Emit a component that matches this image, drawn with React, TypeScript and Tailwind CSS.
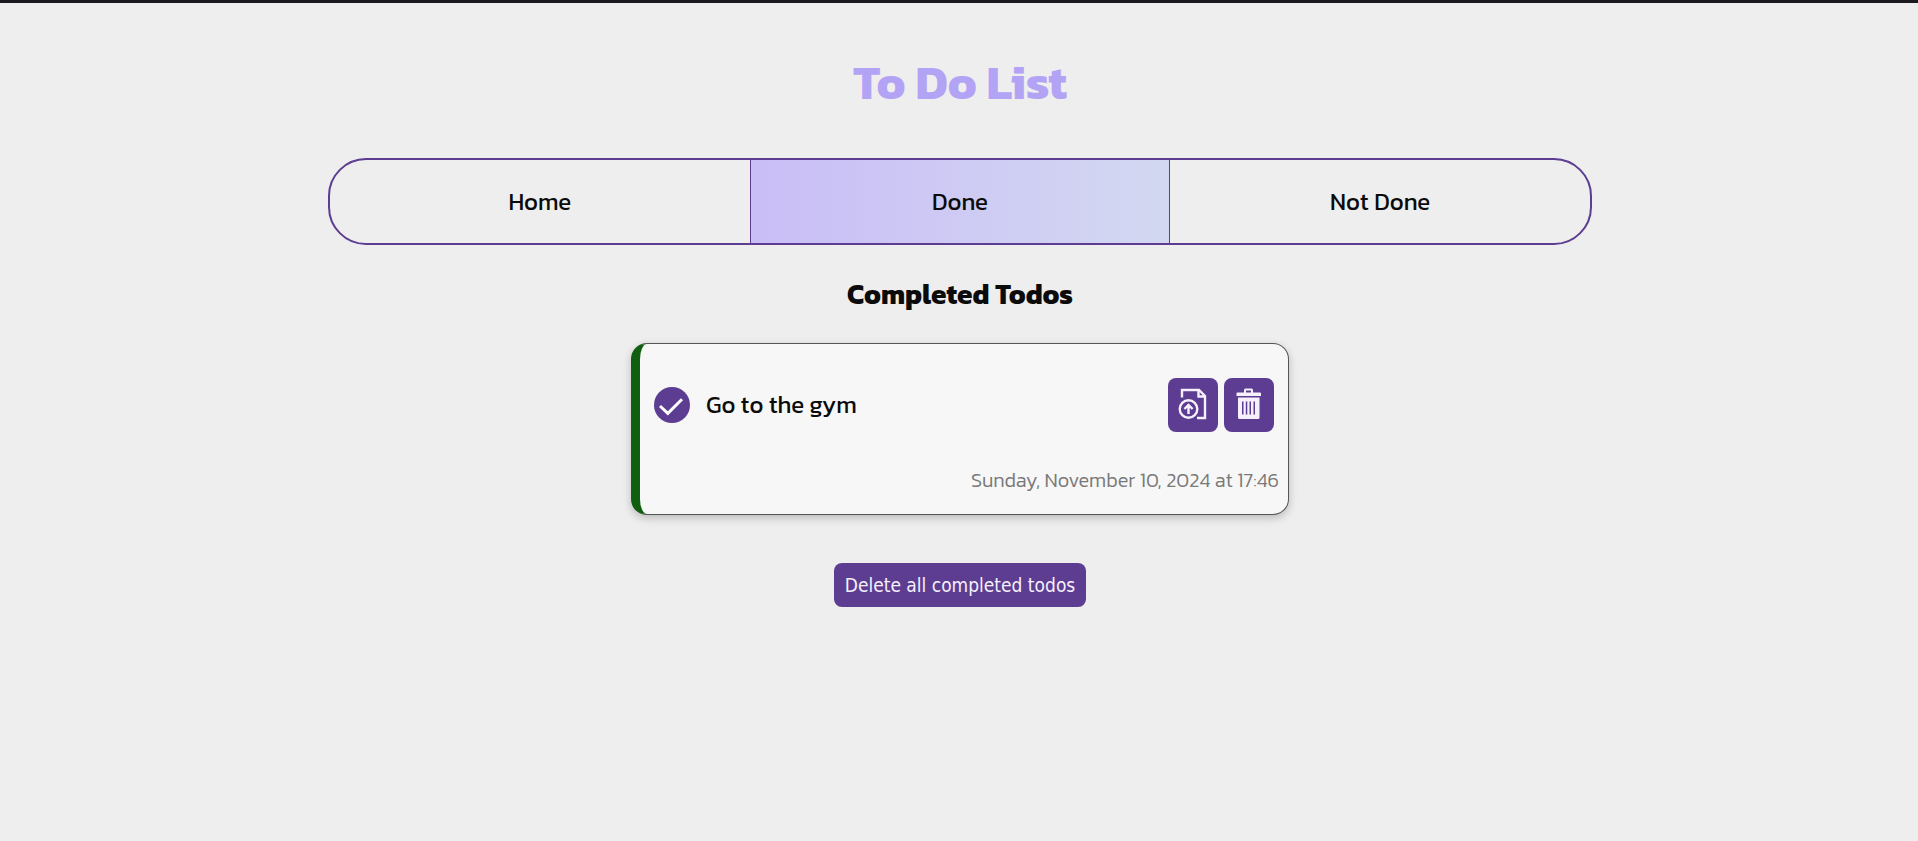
import React, { useState } from "react";

const tabs = ["Home", "Done", "Not Done"];

function CheckIcon() {
  return (
    <svg viewBox="0 0 36 36" className="size-9" aria-hidden="true">
      <circle cx="18" cy="18" r="18" fill="#5c3d91" />
      <path d="M6 19 L13.8 26.3 L28 12.2" fill="none" stroke="#fff" strokeWidth="3" />
    </svg>
  );
}

function RestoreIcon() {
  return (
    <svg viewBox="0 0 32 32" className="size-8" fill="none" stroke="#f5f0fb" strokeWidth="2.4" aria-hidden="true">
      <path d="M5 9.500V2H22L28 8V30H20" />
      <path d="M21.500 2V8.500H28" />
      <circle cx="11.5" cy="21" r="8.8" />
      <path d="M11.500 26V17M7.400 21L11.500 16.900L15.600 21" />
    </svg>
  );
}

function TrashIcon() {
  return (
    <svg viewBox="0 0 32 32" className="size-8" aria-hidden="true">
      <path
        fill="#f5f0fb"
        fillRule="evenodd"
        d="M11 4.5V2Q11 0.500 12.500 0.500H18.500Q20 0.500 20 2V4.500H27Q28 4.500 28 5.500V8H3.500V5.500Q3.500 4.500 4.500 4.500ZM13 4.500H18V2.500H13ZM5 9.500H26.500V29.500Q26.500 31 25 31H6.500Q5 31 5 29.500ZM9 13.500V26.500H10.500V13.500ZM12.800 13.500V26.500H14.300V13.500ZM16.500 13.500V26.500H18V13.500ZM20.500 13.500V26.500H22V13.500Z"
      />
    </svg>
  );
}

export default function App() {
  const [active, setActive] = useState("Done");
  return (
    <div className="min-h-screen border-t-3 border-[#1c1a1f] bg-[#eeeeee] font-['Kanit','Noto_Sans',sans-serif] text-[#0b0b0b]">
      <main className="flex flex-col items-center pl-0.5">
        <h1 className="mt-[47px] text-5xl leading-[64px] font-bold text-[#b3a3f5]">
          To Do List
        </h1>
        <nav className="mt-11 grid h-[87px] w-[66%] grid-cols-3 overflow-hidden rounded-[38px] border-2 border-[#5c3d91]">
          {tabs.map((tab) => (
            <button
              key={tab}
              type="button"
              onClick={() => setActive(tab)}
              className={
                "text-2xl " +
                (tab === active
                  ? "border-x border-[#5c3d91] bg-linear-to-r from-[#c9bdf6] to-[#d3d8f1]"
                  : "")
              }
            >
              {tab}
            </button>
          ))}
        </nav>
        <h2 className="mt-[31px] text-[28px] leading-9 font-bold">Completed Todos</h2>
        <article className="mt-[31px] flex h-[172px] w-[658px] max-w-full flex-col rounded-2xl border border-l-[9px] border-[#555] border-l-[#105f10] bg-[#f7f7f7] shadow-[0_3px_8px_rgba(0,0,0,0.22)]">
          <div className="mt-[34px] flex items-center px-3.5">
            <CheckIcon />
            <p className="ml-4 flex-1 text-2xl">Go to the gym</p>
            <div className="flex gap-1.5">
              <button type="button" aria-label="Restore" className="flex h-[54px] w-[50px] justify-center rounded-lg bg-[#5c3d91] pt-2.5">
                <RestoreIcon />
              </button>
              <button type="button" aria-label="Delete" className="flex h-[54px] w-[50px] justify-center rounded-lg bg-[#5c3d91] pt-2.5">
                <TrashIcon />
              </button>
            </div>
          </div>
          <time className="mt-[34px] pr-[9px] text-right text-xl font-light text-[#7a7a7a]">Sunday, November 10, 2024 at 17:46</time>
        </article>
        <button
          type="button"
          className="mt-12 h-11 rounded-lg bg-[#5c3d91] px-[11px] font-['DejaVu_Sans_Condensed','DejaVu_Sans',sans-serif] text-[19px] text-[#f5f0fb]"
        >
          Delete all completed todos
        </button>
      </main>
    </div>
  );
}
